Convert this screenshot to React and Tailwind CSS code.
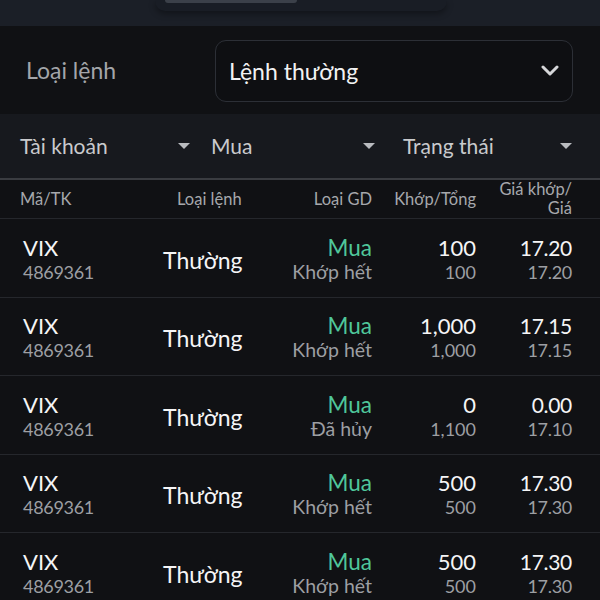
import React from 'react'

const rows = [
  { code: 'VIX', acc: '4869361', type: 'Thường', side: 'Mua', status: 'Khớp hết', matched: '100', total: '100', mPrice: '17.20', price: '17.20' },
  { code: 'VIX', acc: '4869361', type: 'Thường', side: 'Mua', status: 'Khớp hết', matched: '1,000', total: '1,000', mPrice: '17.15', price: '17.15' },
  { code: 'VIX', acc: '4869361', type: 'Thường', side: 'Mua', status: 'Đã hủy', matched: '0', total: '1,100', mPrice: '0.00', price: '17.10' },
  { code: 'VIX', acc: '4869361', type: 'Thường', side: 'Mua', status: 'Khớp hết', matched: '500', total: '500', mPrice: '17.30', price: '17.30' },
  { code: 'VIX', acc: '4869361', type: 'Thường', side: 'Mua', status: 'Khớp hết', matched: '500', total: '500', mPrice: '17.30', price: '17.30' },
]

const Caret = () => (
  <svg width="12" height="7" viewBox="0 0 12 7" className="shrink-0">
    <path d="M0 0 L12 0 L6 6 Z" fill="#b9bbbf" />
  </svg>
)

const Filter = ({ label, className }) => (
  <div className={`flex items-center justify-between ${className}`}>
    <span>{label}</span>
    <Caret />
  </div>
)

const App = () => {
  return (
    <div
      className="w-[600px] h-[600px] overflow-hidden bg-[#101114] text-[#eeeeef]"
      style={{ fontFamily: 'Lato, "Noto Sans", sans-serif' }}
    >
      {/* top tab strip */}
      <div className="h-[26px] bg-[#1b1f27] flex justify-center">
        <div className="w-[292px] h-[11px] ml-[2px] rounded-b-[10px] bg-[#191d25] shadow-[0_3px_6px_rgba(0,0,0,0.35)] pl-[10px]">
          <div className="w-[132px] h-[3px] rounded-b-[6px] bg-[#3b4049]" />
        </div>
      </div>

      {/* order type */}
      <div className="h-[88px] flex items-center pl-[26px] pr-[27px]">
        <span className="w-[189px] text-[23px] text-[#a3a5a9]">Loại lệnh</span>
        <div className="flex-1 h-[62px] rounded-[11px] border border-[#2c2f36] bg-[#0e0f12] flex items-center justify-between pl-[13px] pr-[12px] mt-[2px]">
          <span className="text-[23px] text-[#f2f2f3]">Lệnh thường</span>
          <svg width="20" height="12" viewBox="0 0 20 12">
            <path d="M3 2 L10 9 L17 2" stroke="#d6d7d9" strokeWidth="3" fill="none" strokeLinecap="round" strokeLinejoin="round" />
          </svg>
        </div>
      </div>

      {/* filters */}
      <div className="h-[66px] bg-[#17191e] border-b-2 border-[#3a3c41] flex items-center text-[21px] text-[#c9cacd] pl-[20px] pr-[28px]">
        <Filter label="Tài khoản" className="w-[170px]" />
        <Filter label="Mua" className="w-[164px] ml-[21px]" />
        <Filter label="Trạng thái" className="flex-1 ml-[28px]" />
      </div>

      {/* column headers */}
      <div className="h-[39px] flex items-center text-[16.5px] text-[#a6a8ac] pl-[20px] pr-[28px] border-b border-[#25272c] leading-[19px]">
        <div className="w-[157px]">Mã/TK</div>
        <div className="w-[110px]">Loại lệnh</div>
        <div className="w-[85px] text-right">Loại GD</div>
        <div className="w-[104px] text-right">Khớp/Tổng</div>
        <div className="flex-1 text-right">Giá khớp/<br />Giá</div>
      </div>

      {/* rows */}
      {rows.map((r, i) => (
        <div key={i} className="h-[78.5px] flex items-center pl-[23px] pr-[28px] pt-[3px] border-b border-[#25272c]">
          <div className="w-[140px] flex flex-col">
            <span className="text-[22px] leading-[25px] text-[#f5f5f6]">{r.code}</span>
            <span className="text-[18px] leading-[24px] text-[#9d9fa3] tracking-[-0.3px]">{r.acc}</span>
          </div>
          <div className="w-[110px] text-[23px] text-[#f5f5f6] mt-[1px]">{r.type}</div>
          <div className="w-[99px] flex flex-col items-end">
            <span className="text-[22.5px] leading-[25px] text-[#4fc79b]">{r.side}</span>
            <span className="text-[19.5px] leading-[24px] text-[#9d9fa3]">{r.status}</span>
          </div>
          <div className="w-[104px] flex flex-col items-end">
            <span className="text-[22px] leading-[25px] text-[#f5f5f6]">{r.matched}</span>
            <span className="text-[18px] leading-[24px] text-[#9d9fa3]">{r.total}</span>
          </div>
          <div className="flex-1 flex flex-col items-end">
            <span className="text-[21px] leading-[25px] text-[#f5f5f6] tracking-[-0.3px]">{r.mPrice}</span>
            <span className="text-[18px] leading-[24px] text-[#9d9fa3] tracking-[-0.3px]">{r.price}</span>
          </div>
        </div>
      ))}
    </div>
  )
}

export default App
